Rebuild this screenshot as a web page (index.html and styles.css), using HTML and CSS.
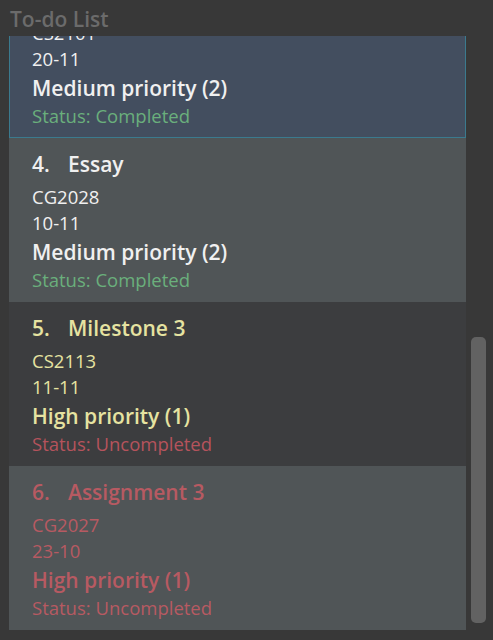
FILE: index.html
```html
<!DOCTYPE html>
<html>
<head>
<meta charset="utf-8">
<link rel="stylesheet" href="styles.css">
</head>
<body>
<div class="app">
  <div class="header">To-do List</div>
  <div class="panel">
    <div class="viewport">
      <div class="list">
        <div class="card selected done">
          <div class="title"><span class="idx">3.</span>Reflection</div>
          <div class="line">CS2101</div>
          <div class="line">20-11</div>
          <div class="prio">Medium priority (2)</div>
          <div class="status">Status: Completed</div>
        </div>
        <div class="card alt done">
          <div class="title"><span class="idx">4.</span>Essay</div>
          <div class="line">CG2028</div>
          <div class="line">10-11</div>
          <div class="prio">Medium priority (2)</div>
          <div class="status">Status: Completed</div>
        </div>
        <div class="card high">
          <div class="title"><span class="idx">5.</span>Milestone 3</div>
          <div class="line">CS2113</div>
          <div class="line">11-11</div>
          <div class="prio">High priority (1)</div>
          <div class="status">Status: Uncompleted</div>
        </div>
        <div class="card alt overdue">
          <div class="title"><span class="idx">6.</span>Assignment 3</div>
          <div class="line">CG2027</div>
          <div class="line">23-10</div>
          <div class="prio">High priority (1)</div>
          <div class="status">Status: Uncompleted</div>
        </div>
      </div>
    </div>
    <div class="scrollbar"><div class="thumb"></div></div>
  </div>
</div>
</body>
</html>
```
FILE: styles.css
```css
html, body {
  margin: 0;
  padding: 0;
  background: #383838;
}
.app {
  width: 493px;
  height: 640px;
  font-family: "Open Sans", "Noto Sans", sans-serif;
  overflow: hidden;
}
.header {
  height: 36px;
  box-sizing: border-box;
  padding-left: 10px;
  padding-top: 4px;
  line-height: 30px;
  font-size: 21px;
  font-weight: 600;
  color: #6b6b6b;
}
.panel {
  display: flex;
  height: 604px;
}
.viewport {
  width: 457px;
  margin-left: 9px;
  overflow: hidden;
}
.list {
  margin-top: -62px;
}
.card {
  height: 164px;
  box-sizing: border-box;
  padding: 11px 10px 9px 23px;
  background: #3c3d3f;
  color: #f0f0f0;
}
.card.alt {
  background: #505557;
}
.card.selected {
  background: #434e5f;
  border: 1px solid #3b7a8e;
  padding: 10px 9px 8px 22px;
}
.title {
  font-size: 21px;
  font-weight: 600;
  line-height: 30px;
  white-space: nowrap;
}
.idx {
  display: inline-block;
  width: 36px;
}
.line {
  font-size: 18.5px;
  line-height: 26px;
}
.title + .line {
  margin-top: 5px;
}
.prio {
  font-size: 21px;
  font-weight: 600;
  line-height: 30px;
  margin-top: 1px;
}
.status {
  font-size: 18.5px;
  line-height: 26px;
}
.done .status {
  color: #6aaf7c;
}
.high {
  color: #e6e3a1;
}
.high .status {
  color: #b5535c;
}
.overdue {
  color: #b75a62;
}
.overdue .status {
  color: #b75a62;
}
.scrollbar {
  width: 27px;
}
.thumb {
  margin-top: 301px;
  margin-left: 5px;
  width: 15px;
  height: 286px;
  border-radius: 5px;
  background: #626262;
}
```
